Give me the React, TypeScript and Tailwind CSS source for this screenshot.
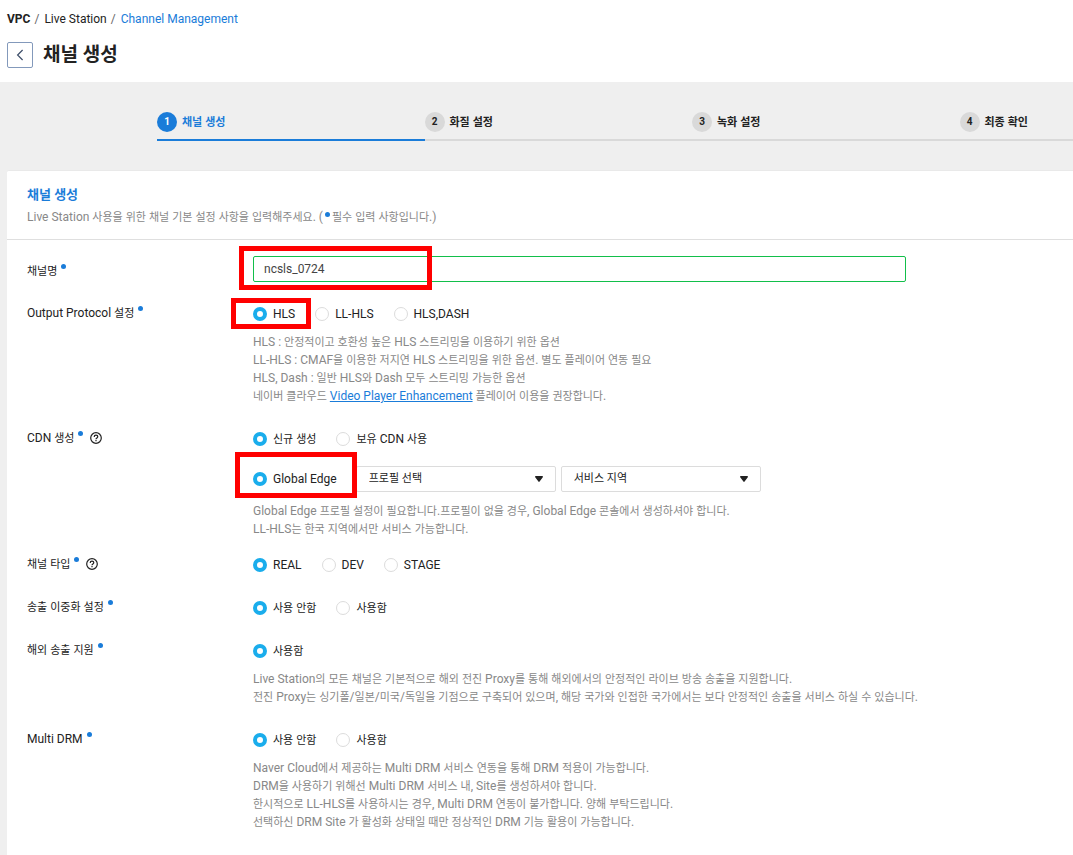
import { useState, type ReactNode } from 'react';

const steps = ['채널 생성', '화질 설정', '녹화 설정', '최종 확인'];

/** Sets Hangul runs one size below the Latin text around them, so both look equally large. */
function Mixed({ text }: { text: string }) {
  return (
    <>
      {text.split(/([\uAC00-\uD7A3]+)/).map((part, i) =>
        i % 2 === 1 ? <span key={i} className="text-[11px] leading-none">{part}</span> : part,
      )}
    </>
  );
}

function Dot({ className = '' }: { className?: string }) {
  return <span aria-hidden="true" className={`inline-block size-[5px] shrink-0 rounded-full bg-[#1a7cd9] ${className}`} />;
}

function HelpIcon() {
  return (
    <button type="button" aria-label="도움말" className="ml-[7px] mt-[2px] size-3 shrink-0 cursor-pointer">
      <svg viewBox="0 0 12 12" className="block size-3" fill="none" stroke="#222" strokeWidth="1.2">
        <circle cx="6" cy="6" r="5.3" />
        <path d="M4.2 4.9C4.2 3.8 5 3.1 6 3.1s1.8.6 1.8 1.6C7.8 5.9 6 5.9 6 7.2" />
        <path d="M6 8v1.3" />
      </svg>
    </button>
  );
}

function Highlight({ className }: { className: string }) {
  return <span aria-hidden="true" className={`pointer-events-none absolute z-10 border-5 border-[#ff0000] ${className}`} />;
}

function Radio({ name, label, checked = false }: { name: string; label: string; checked?: boolean }) {
  return (
    <label className="flex cursor-pointer items-center gap-[6px] whitespace-nowrap">
      <input
        type="radio"
        name={name}
        defaultChecked={checked}
        className="size-[14px] shrink-0 appearance-none rounded-full border border-[#dcdcdc] bg-white checked:border-4 checked:border-[#1aadec]"
      />
      <span><Mixed text={label} /></span>
    </label>
  );
}

function RadioRow({ children }: { children: ReactNode }) {
  return <div className="relative flex h-[18px] items-center gap-5">{children}</div>;
}

function Description({ lines, children }: { lines: string[]; children?: ReactNode }) {
  return (
    <div className="mt-[10px] text-[#888]">
      {lines.map((line) => (
        <p key={line}><Mixed text={line} /></p>
      ))}
      {children}
    </div>
  );
}

function Row({ label, help = false, htmlFor, className = 'mt-[25px]', labelClassName = '', children }: {
  label: string;
  help?: boolean;
  htmlFor?: string;
  className?: string;
  labelClassName?: string;
  children: ReactNode;
}) {
  return (
    <div className={`flex ${className}`}>
      <div className={`flex w-[226px] shrink-0 items-start leading-4 ${labelClassName}`}>
        {htmlFor ? <label htmlFor={htmlFor}><Mixed text={label} /></label> : <span><Mixed text={label} /></span>}
        <Dot className="ml-1 mt-[1px]" />
        {help && <HelpIcon />}
      </div>
      <div className="min-w-0 flex-1">{children}</div>
    </div>
  );
}

function Dropdown({ label }: { label: string }) {
  return (
    <div className="relative w-[200px] shrink-0">
      <select aria-label={label} className="block h-[26px] w-full appearance-none rounded-xs border border-[#dcdcdc] bg-white pl-3 pr-8 text-[11px]">
        <option>{label}</option>
      </select>
      <svg viewBox="0 0 8 6" className="pointer-events-none absolute right-[13px] top-[10px] h-[6px] w-2" fill="#222">
        <path d="M.8 0h6.4c.7 0 1 .7.6 1.2L4.6 5.6c-.3.4-.9.4-1.2 0L.2 1.2C-.2.7.1 0 .8 0Z" />
      </svg>
    </div>
  );
}

export default function App() {
  const [channelName, setChannelName] = useState('ncsls_0724');

  return (
    <div className="flex min-h-screen flex-col bg-white font-[Roboto,'Noto_Sans_CJK_KR',sans-serif] text-xs leading-[18px] text-[#222]">
      <header className="h-[82px] px-[7px] pt-[10px]">
        <nav aria-label="Breadcrumb" className="flex">
          <span className="font-bold">VPC</span>
          <span className="ml-1 mr-[5px] text-[#666]">/</span>
          <span>Live Station</span>
          <span className="ml-1 mr-[5px] text-[#666]">/</span>
          <a href="#channels" className="text-[#1a7cd9]">Channel Management</a>
        </nav>
        <div className="mt-[14px] flex items-center gap-[10px]">
          <button type="button" aria-label="뒤로" className="flex size-[26px] items-center justify-center rounded-xs border border-[#8399bb] bg-white">
            <svg viewBox="0 0 8 12" className="h-3 w-2" fill="none" stroke="#3c4d68" strokeWidth="1.2">
              <path d="M6.6 1 1.6 6l5 5" />
            </svg>
          </button>
          <h1 className="text-[19px] leading-6 font-bold">채널 생성</h1>
        </div>
      </header>

      <main className="flex flex-1 flex-col bg-[#efefef] pl-[7px] pt-[30px]">
        <ol className="ml-[150px] grid grid-cols-[33fr_33fr_33fr_14fr]">
          {steps.map((step, i) => (
            <li
              key={step}
              aria-current={i === 0 ? 'step' : undefined}
              className={`flex items-center gap-[5px] border-b-2 pb-[7px] font-bold whitespace-nowrap ${i === 0 ? 'border-[#1a7cd9] text-[#1a7cd9]' : 'border-[#d9d9d9]'}`}
            >
              <span className={`flex size-5 items-center justify-center rounded-full text-[10px] ${i === 0 ? 'bg-[#1a7cd9] text-white' : 'bg-[#d9d9d9]'}`}>
                {i + 1}
              </span>
              <span><Mixed text={step} /></span>
            </li>
          ))}
        </ol>

        <section className="mt-[29px] flex-1 rounded-tl-xs border-t border-[#e9e9e9] bg-white pb-6">
          <div className="border-b border-[#dfdfdf] pb-[13px] pl-5 pt-[15px]">
            <h2 className="text-[13px] leading-[18px] font-bold text-[#1a7cd9]">채널 생성</h2>
            <p className="mt-1 h-[18px] text-[#888]">
              <Mixed text="Live Station 사용을 위한 채널 기본 설정 사항을 입력해주세요. (" />
              <Dot className="mx-[2px] align-[4px]" />
              <Mixed text="필수 입력 사항입니다.)" />
            </p>
          </div>

          <form className="pl-5 pt-4">
            <Row label="채널명" htmlFor="channel-name" className="" labelClassName="pt-[7px]">
              <div className="relative mr-[167px]">
                <input
                  id="channel-name"
                  type="text"
                  value={channelName}
                  onChange={(e) => setChannelName(e.target.value)}
                  className="block h-[26px] w-full rounded-xs border border-[#12bf4a] bg-white px-[10px] text-[#444] outline-none"
                />
                <Highlight className="-left-[14px] -top-[10px] h-[44px] w-[193px]" />
              </div>
            </Row>

            <Row label="Output Protocol 설정" className="mt-[23px]">
              <RadioRow>
                <Radio name="protocol" label="HLS" checked />
                <Radio name="protocol" label="LL-HLS" />
                <Radio name="protocol" label="HLS,DASH" />
                <Highlight className="-left-[22px] -top-[7px] h-[31px] w-20" />
              </RadioRow>
              <Description
                lines={[
                  'HLS : 안정적이고 호환성 높은 HLS 스트리밍을 이용하기 위한 옵션',
                  'LL-HLS : CMAF을 이용한 저지연 HLS 스트리밍을 위한 옵션. 별도 플레이어 연동 필요',
                  'HLS, Dash : 일반 HLS와 Dash 모두 스트리밍 가능한 옵션',
                ]}
              >
                <p>
                  <Mixed text="네이버 클라우드 " />
                  <a href="#player" className="text-[#1a7cd9] underline">Video Player Enhancement</a>
                  <Mixed text=" 플레이어 이용을 권장합니다." />
                </p>
              </Description>
            </Row>

            <Row label="CDN 생성" help>
              <RadioRow>
                <Radio name="cdn" label="신규 생성" checked />
                <Radio name="cdn" label="보유 CDN 사용" />
              </RadioRow>
              <div className="relative mt-[18px] flex items-center">
                <Radio name="cdn-type" label="Global Edge" checked />
                <div className="ml-[19px] flex gap-[5px]">
                  <Dropdown label="프로필 선택" />
                  <Dropdown label="서비스 지역" />
                </div>
                <Highlight className="-left-[18px] -top-[14px] h-[46px] w-[122px]" />
              </div>
              <Description
                lines={[
                  'Global Edge 프로필 설정이 필요합니다.프로필이 없을 경우, Global Edge 콘솔에서 생성하셔야 합니다.',
                  'LL-HLS는 한국 지역에서만 서비스 가능합니다.',
                ]}
              />
            </Row>

            <Row label="채널 타입" help className="mt-[18px]">
              <RadioRow>
                <Radio name="channel-type" label="REAL" checked />
                <Radio name="channel-type" label="DEV" />
                <Radio name="channel-type" label="STAGE" />
              </RadioRow>
            </Row>

            <Row label="송출 이중화 설정">
              <RadioRow>
                <Radio name="redundancy" label="사용 안함" checked />
                <Radio name="redundancy" label="사용함" />
              </RadioRow>
            </Row>

            <Row label="해외 송출 지원">
              <RadioRow>
                <Radio name="overseas" label="사용함" checked />
              </RadioRow>
              <Description
                lines={[
                  'Live Station의 모든 채널은 기본적으로 해외 전진 Proxy를 통해 해외에서의 안정적인 라이브 방송 송출을 지원합니다.',
                  '전진 Proxy는 싱기폴/일본/미국/독일을 기점으로 구축되어 있으며, 해당 국가와 인접한 국가에서는 보다 안정적인 송출을 서비스 하실 수 있습니다.',
                ]}
              />
            </Row>

            <Row label="Multi DRM">
              <RadioRow>
                <Radio name="drm" label="사용 안함" checked />
                <Radio name="drm" label="사용함" />
              </RadioRow>
              <Description
                lines={[
                  'Naver Cloud에서 제공하는 Multi DRM 서비스 연동을 통해 DRM 적용이 가능합니다.',
                  'DRM을 사용하기 위해선 Multi DRM 서비스 내, Site를 생성하셔야 합니다.',
                  '한시적으로 LL-HLS를 사용하시는 경우, Multi DRM 연동이 불가합니다. 양해 부탁드립니다.',
                  '선택하신 DRM Site 가 활성화 상태일 때만 정상적인 DRM 기능 활용이 가능합니다.',
                ]}
              />
            </Row>
          </form>
        </section>
      </main>
    </div>
  );
}
